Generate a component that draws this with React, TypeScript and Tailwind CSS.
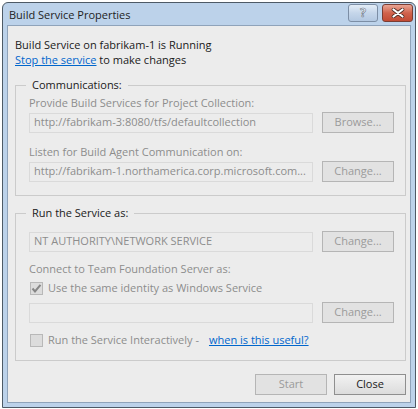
import React from "react";

const font = { fontFamily: '"Segoe UI","Open Sans","Noto Sans",sans-serif' };

function Btn({ label, disabled }: { label: string; disabled?: boolean }) {
  return (
    <div
      className={
        "w-[72px] h-[21px] flex items-center justify-center text-[11px] border " +
        (disabled
          ? "border-[#b5b5b5] bg-[#e2e2e2] text-[#9a9a9a]"
          : "border-[#8f8f8f] bg-gradient-to-b from-[#f2f2f2] to-[#dcdcdc] text-[#1a1a1a]")
      }
    >
      {label}
    </div>
  );
}

function Field({ value }: { value: string }) {
  return (
    <div className="w-[284px] h-[20px] border border-[#dadada] bg-[#ececec] text-[11px] text-[#8d8d8d] pl-[4px] flex items-center whitespace-nowrap overflow-hidden">
      {value}
    </div>
  );
}

function Check({ checked }: { checked?: boolean }) {
  return (
    <div className="w-[13px] h-[13px] border border-[#b8b8b8] bg-[#dcdcdc] flex items-center justify-center">
      {checked && (
        <svg width="11" height="11" viewBox="0 0 11 11">
          <path d="M1.5 5.5 L4 8.5 L9.5 1.8" stroke="#868686" strokeWidth="2" fill="none" />
        </svg>
      )}
    </div>
  );
}

export default function App() {
  return (
    <div className="w-[418px] h-[409px] bg-white" style={font}>
      <div className="ml-[2px] pt-[2px]">
        <div className="w-[414px] h-[406px] border border-[#4d5a66] rounded-t-[6px] bg-[#bcd2ea] flex flex-col">
          {/* title bar */}
          <div className="h-[22px] flex items-center pl-[6px] pr-[2px]">
            <div className="text-[11px] text-[#1e1e1e] flex-1 leading-none pt-[1px]">Build Service Properties</div>
            <div className="flex gap-[4px] -mt-[2px]">
              <div className="w-[30px] h-[18px] rounded-[3px] border border-[#7c8ea5] bg-gradient-to-b from-[#e4edf7] via-[#c5d6ea] to-[#b3c8e1] flex items-center justify-center">
                <span className="text-[12px] font-bold text-white leading-none" style={{ WebkitTextStroke: "0.6px #5d6b7c" }}>?</span>
              </div>
              <div className="w-[31px] h-[18px] rounded-[3px] border border-[#7a3d33] bg-gradient-to-b from-[#e8a493] via-[#d0624c] to-[#c24a33] flex items-center justify-center">
                <svg width="14" height="10" viewBox="0 0 14 10">
                  <path d="M2.5 1.5 L11.5 8.5 M11.5 1.5 L2.5 8.5" stroke="#4a2a22" strokeWidth="3.6" strokeLinecap="round" />
                  <path d="M2.5 1.5 L11.5 8.5 M11.5 1.5 L2.5 8.5" stroke="#ffffff" strokeWidth="2.2" strokeLinecap="round" />
                </svg>
              </div>
            </div>
          </div>
          {/* client area */}
          <div className="mx-[4px] mb-[4px] flex-1 border border-[#8fa3ba] bg-[#ececec] px-[7px] text-[11px] text-[#1a1a1a]">
            <div className="pt-[11px] leading-[15px]">
              <div>Build Service on fabrikam-1 is Running</div>
              <div>
                <span className="text-[#0066cc] underline">Stop the service</span> to make changes
              </div>
            </div>

            {/* group 1 */}
            <div className="relative mt-[18px] w-[391px] border border-[#cbcbcb] pl-[13px] pt-[9px] pb-[13px] text-[#8d8d8d]">
              <div className="absolute -top-[9px] left-[10px] bg-[#ececec] px-[6px] text-[#1a1a1a] leading-[16px]">Communications:</div>
              <div className="leading-[16px]">Provide Build Services for Project Collection:</div>
              <div className="flex items-center gap-[9px] mt-[1px]">
                <Field value="http://fabrikam-3:8080/tfs/defaultcollection" />
                <Btn label="Browse..." disabled />
              </div>
              <div className="leading-[16px] mt-[11px]">Listen for Build Agent Communication on:</div>
              <div className="flex items-center gap-[9px] mt-[1px]">
                <Field value="http://fabrikam-1.northamerica.corp.microsoft.com..." />
                <Btn label="Change..." disabled />
              </div>
            </div>

            {/* group 2 */}
            <div className="relative mt-[17px] w-[391px] border border-[#cbcbcb] pl-[13px] pt-[17px] pb-[12px] text-[#8d8d8d]">
              <div className="absolute -top-[9px] left-[10px] bg-[#ececec] px-[6px] text-[#1a1a1a] leading-[16px]">Run the Service as:</div>
              <div className="flex items-center gap-[9px]">
                <Field value="NT AUTHORITY\NETWORK SERVICE" />
                <Btn label="Change..." disabled />
              </div>
              <div className="leading-[16px] mt-[9px]">Connect to Team Foundation Server as:</div>
              <div className="flex items-center gap-[5px] mt-[3px] ml-[1px] leading-[16px]">
                <Check checked />
                <span>Use the same identity as Windows Service</span>
              </div>
              <div className="flex items-center gap-[9px] mt-[6px]">
                <Field value="" />
                <Btn label="Change..." disabled />
              </div>
              <div className="flex items-center mt-[9px] ml-[1px] leading-[16px]">
                <Check />
                <span className="ml-[5px]">Run the Service Interactively -</span>
                <span className="ml-[10px] text-[#0066cc] underline">when is this useful?</span>
              </div>
            </div>

            {/* footer */}
            <div className="flex justify-end gap-[7px] mt-[13px] w-[391px]">
              <Btn label="Start" disabled />
              <Btn label="Close" />
            </div>
          </div>
        </div>
      </div>
    </div>
  );
}
